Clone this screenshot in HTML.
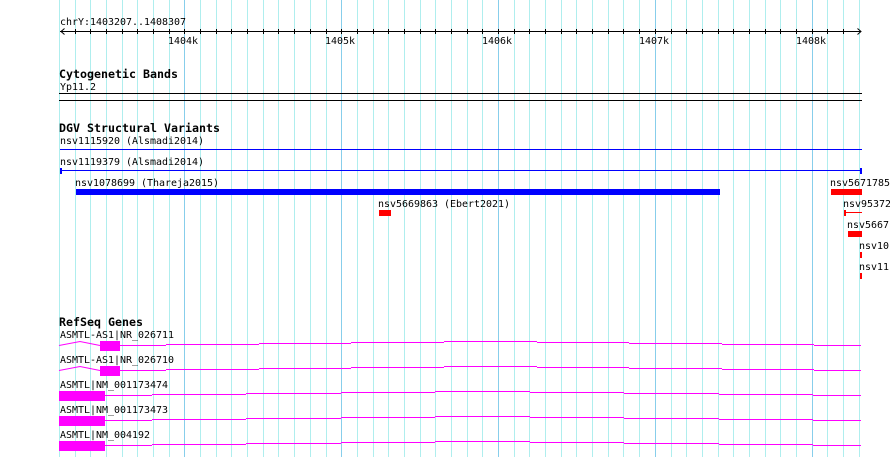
<!DOCTYPE html>
<html>
<head>
<meta charset="utf-8">
<style>
html,body{margin:0;padding:0;background:#fff;width:890px;height:457px;overflow:hidden}
svg{display:block}
text{font-family:"DejaVu Sans Mono","Liberation Mono",monospace;font-size:9.97px;fill:#000}
text.b{font-size:11.63px;font-weight:bold}
</style>
</head>
<body>
<svg width="890" height="457" viewBox="0 0 890 457" xmlns="http://www.w3.org/2000/svg">
<rect width="890" height="457" fill="#fff"/>
<g shape-rendering="crispEdges" fill="none">
<path stroke="#afeeee" d="M59.5 0V457M75.5 0V457M90.5 0V457M106.5 0V457M122.5 0V457M137.5 0V457M153.5 0V457M169.5 0V457M200.5 0V457M216.5 0V457M231.5 0V457M247.5 0V457M263.5 0V457M278.5 0V457M294.5 0V457M310.5 0V457M326.5 0V457M357.5 0V457M373.5 0V457M388.5 0V457M404.5 0V457M420.5 0V457M435.5 0V457M451.5 0V457M467.5 0V457M482.5 0V457M514.5 0V457M529.5 0V457M545.5 0V457M561.5 0V457M576.5 0V457M592.5 0V457M608.5 0V457M623.5 0V457M639.5 0V457M671.5 0V457M686.5 0V457M702.5 0V457M718.5 0V457M733.5 0V457M749.5 0V457M765.5 0V457M780.5 0V457M796.5 0V457M827.5 0V457M843.5 0V457M859.5 0V457"/>
<path stroke="#87ceeb" d="M184.5 0V457M341.5 0V457M498.5 0V457M655.5 0V457M812.5 0V457"/>
<path stroke="#000" d="M60 31.5H861M75.5 29V34M90.5 29V34M106.5 29V34M122.5 29V34M137.5 29V34M153.5 29V34M169.5 29V34M184.5 29V34M200.5 29V34M216.5 29V34M231.5 29V34M247.5 29V34M263.5 29V34M278.5 29V34M294.5 29V34M310.5 29V34M326.5 29V34M341.5 29V34M357.5 29V34M373.5 29V34M388.5 29V34M404.5 29V34M420.5 29V34M435.5 29V34M451.5 29V34M467.5 29V34M482.5 29V34M498.5 29V34M514.5 29V34M529.5 29V34M545.5 29V34M561.5 29V34M576.5 29V34M592.5 29V34M608.5 29V34M623.5 29V34M639.5 29V34M655.5 29V34M671.5 29V34M686.5 29V34M702.5 29V34M718.5 29V34M733.5 29V34M749.5 29V34M765.5 29V34M780.5 29V34M796.5 29V34M812.5 29V34M827.5 29V34M843.5 29V34"/>
<path stroke="#000" shape-rendering="auto" d="M64.5 28.5L61 31.5L64.5 34.5M857.5 28.5L861 31.5L857.5 34.5"/>
<path stroke="#000" d="M59 93.5H862M59 100.5H862"/>
<path stroke="#0000ff" d="M60 149.5H862M60 170.5H862"/>
</g>
<g shape-rendering="crispEdges" fill="#0000ff">
<rect x="60" y="168" width="2" height="6"/>
<rect x="860" y="168" width="2" height="6"/>
<rect x="76" y="189" width="644" height="6"/>
</g>
<g shape-rendering="crispEdges" fill="#ff0000">
<rect x="379" y="210" width="12" height="6"/>
<rect x="831" y="189" width="31" height="6"/>
<rect x="844" y="210" width="2" height="6"/>
<rect x="844" y="212" width="18" height="1"/>
<rect x="848" y="231" width="14" height="6"/>
<rect x="860" y="252" width="2" height="6"/>
<rect x="860" y="273" width="2" height="6"/>
</g>
<g shape-rendering="crispEdges" fill="#ff00ff">
<rect x="100" y="341" width="20" height="10"/>
<rect x="100" y="366" width="20" height="10"/>
<rect x="59" y="391" width="46" height="10"/>
<rect x="59" y="416" width="46" height="10"/>
<rect x="59" y="441" width="46" height="10"/>
</g>
<g fill="none" stroke="#ff00ff">
<path d="M59 345.5L80 341.5L100 345.5"/>
<path d="M59 370.5L80 366.5L100 370.5"/>
<g shape-rendering="crispEdges">
<path d="M120 345.5H166M166 344.5H259M259 343.5H351M351 342.5H444M444 341.5H537M537 342.5H629M629 343.5H722M722 344.5H814M814 345.5H861"/>
<path d="M120 370.5H166M166 369.5H259M259 368.5H351M351 367.5H444M444 366.5H537M537 367.5H629M629 368.5H722M722 369.5H814M814 370.5H861"/>
<path d="M105 395.5H152M152 394.5H246M246 393.5H341M341 392.5H435M435 391.5H530M530 392.5H624M624 393.5H719M719 394.5H813M813 395.5H861"/>
<path d="M105 420.5H152M152 419.5H246M246 418.5H341M341 417.5H435M435 416.5H530M530 417.5H624M624 418.5H719M719 419.5H813M813 420.5H861"/>
<path d="M105 445.5H152M152 444.5H246M246 443.5H341M341 442.5H435M435 441.5H530M530 442.5H624M624 443.5H719M719 444.5H813M813 445.5H861"/>
</g>
</g>
<text x="60" y="25">chrY:1403207..1408307</text>
<text x="168" y="44">1404k</text>
<text x="325" y="44">1405k</text>
<text x="482" y="44">1406k</text>
<text x="639" y="44">1407k</text>
<text x="796" y="44">1408k</text>
<text class="b" x="59" y="78">Cytogenetic Bands</text>
<text x="60" y="90">Yp11.2</text>
<text class="b" x="59" y="132">DGV Structural Variants</text>
<text x="60" y="144">nsv1115920 (Alsmadi2014)</text>
<text x="60" y="165">nsv1119379 (Alsmadi2014)</text>
<text x="75" y="186">nsv1078699 (Thareja2015)</text>
<text x="378" y="207">nsv5669863 (Ebert2021)</text>
<text x="830" y="186">nsv5671785</text>
<text x="843" y="207">nsv95372</text>
<text x="847" y="228">nsv5667</text>
<text x="859" y="249">nsv10</text>
<text x="859" y="270">nsv11</text>
<text class="b" x="59" y="326">RefSeq Genes</text>
<text x="60" y="338">ASMTL-AS1|NR_026711</text>
<text x="60" y="363">ASMTL-AS1|NR_026710</text>
<text x="60" y="388">ASMTL|NM_001173474</text>
<text x="60" y="413">ASMTL|NM_001173473</text>
<text x="60" y="438">ASMTL|NM_004192</text>
</svg>
</body>
</html>
